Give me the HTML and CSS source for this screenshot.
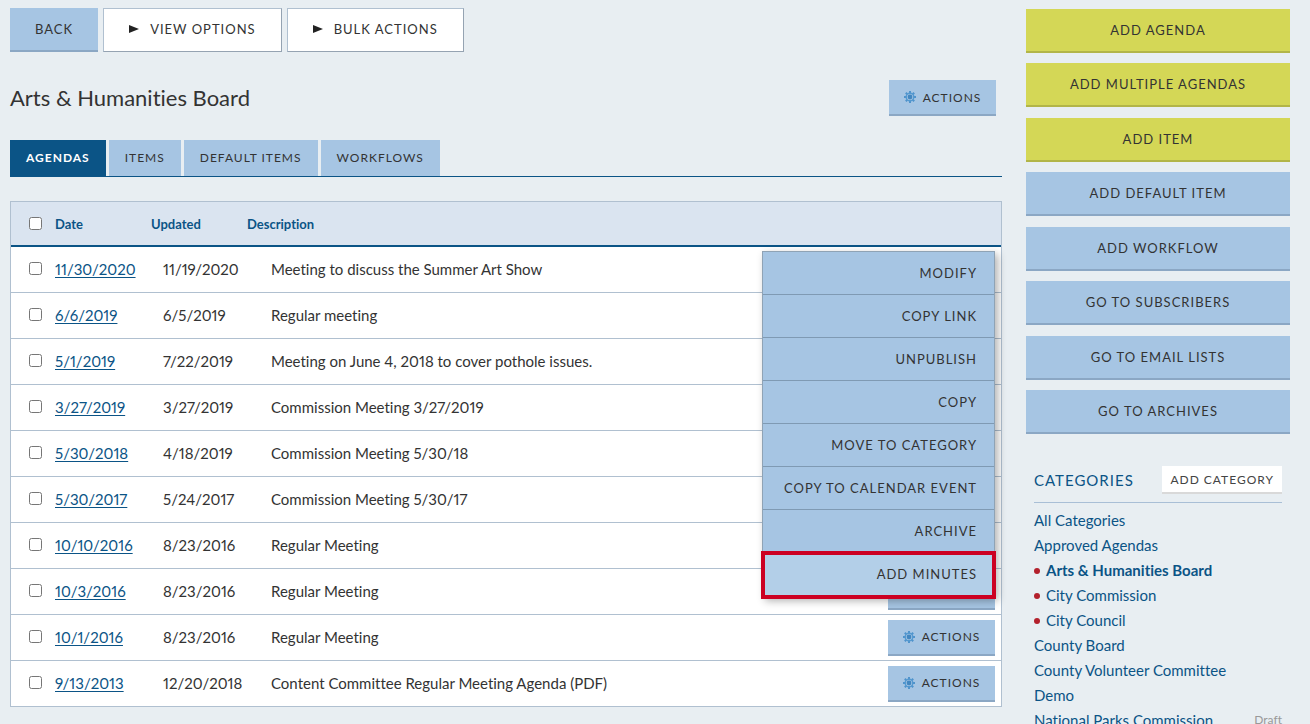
FILE: index.html
```html
<!DOCTYPE html>
<html lang="en">
<head>
  <meta charset="UTF-8" />
  <meta name="viewport" content="width=device-width, initial-scale=1" />
  <title>Agenda Center - Arts &amp; Humanities Board</title>
  <link rel="stylesheet" href="styles.css">
</head>
<body>

  <svg class="sprite" aria-hidden="true">
    <symbol id="gear" viewBox="0 0 12 12">
      <path d="M6 0V12M0 6H12M1.8 1.8L10.2 10.2M10.2 1.8L1.8 10.2" stroke="#4f93cb" stroke-width="2" />
      <circle cx="6" cy="6" r="3.8" fill="#a6c5e3" stroke="#5499d0" stroke-width="1.4" />
      <circle cx="6" cy="6" r="2.4" fill="#4387c0" />
    </symbol>
  </svg>

  <div class="page">
    <main class="main">
      <div class="toolbar">
        <button class="button" type="button">Back</button>
        <button class="button button-white" type="button"><svg class="arrow" viewBox="0 0 10 8" aria-hidden="true"><path d="M0 0L10 4L0 8Z" /></svg>View Options</button>
        <button class="button button-white" type="button"><svg class="arrow" viewBox="0 0 10 8" aria-hidden="true"><path d="M0 0L10 4L0 8Z" /></svg>Bulk Actions</button>
      </div>

      <div class="heading">
        <h1>Arts &amp; Humanities Board</h1>
        <button class="button actions" type="button"><svg class="gear" aria-hidden="true"><use href="#gear" /></svg>Actions</button>
      </div>

      <nav class="tabs">
        <a class="active" href="#">Agendas</a>
        <a href="#">Items</a>
        <a href="#">Default Items</a>
        <a href="#">Workflows</a>
      </nav>

      <table class="agendas">
        <thead>
          <tr>
            <th class="check"><input type="checkbox" aria-label="Select all"></th>
            <th>Date</th>
            <th>Updated</th>
            <th class="description">Description</th>
          </tr>
        </thead>
        <tbody>
          <tr>
            <td class="check"><input type="checkbox" aria-label="Select 11/30/2020"></td>
            <td><a href="#">11/30/2020</a></td>
            <td>11/19/2020</td>
            <td class="description">Meeting to discuss the Summer Art Show</td>
            <td class="options">
              <ul class="menu">
                <li><a href="#">Modify</a></li>
                <li><a href="#">Copy Link</a></li>
                <li><a href="#">Unpublish</a></li>
                <li><a href="#">Copy</a></li>
                <li><a href="#">Move to Category</a></li>
                <li><a href="#">Copy to Calendar Event</a></li>
                <li><a href="#">Archive</a></li>
                <li class="highlight"><a href="#">Add Minutes</a></li>
              </ul>
            </td>
          </tr>
          <tr>
            <td class="check"><input type="checkbox" aria-label="Select 6/6/2019"></td>
            <td><a href="#">6/6/2019</a></td>
            <td>6/5/2019</td>
            <td class="description">Regular meeting</td>
          </tr>
          <tr>
            <td class="check"><input type="checkbox" aria-label="Select 5/1/2019"></td>
            <td><a href="#">5/1/2019</a></td>
            <td>7/22/2019</td>
            <td class="description">Meeting on June 4, 2018 to cover pothole issues.</td>
          </tr>
          <tr>
            <td class="check"><input type="checkbox" aria-label="Select 3/27/2019"></td>
            <td><a href="#">3/27/2019</a></td>
            <td>3/27/2019</td>
            <td class="description">Commission Meeting 3/27/2019</td>
          </tr>
          <tr>
            <td class="check"><input type="checkbox" aria-label="Select 5/30/2018"></td>
            <td><a href="#">5/30/2018</a></td>
            <td>4/18/2019</td>
            <td class="description">Commission Meeting 5/30/18</td>
          </tr>
          <tr>
            <td class="check"><input type="checkbox" aria-label="Select 5/30/2017"></td>
            <td><a href="#">5/30/2017</a></td>
            <td>5/24/2017</td>
            <td class="description">Commission Meeting 5/30/17</td>
          </tr>
          <tr>
            <td class="check"><input type="checkbox" aria-label="Select 10/10/2016"></td>
            <td><a href="#">10/10/2016</a></td>
            <td>8/23/2016</td>
            <td class="description">Regular Meeting</td>
          </tr>
          <tr>
            <td class="check"><input type="checkbox" aria-label="Select 10/3/2016"></td>
            <td><a href="#">10/3/2016</a></td>
            <td>8/23/2016</td>
            <td class="description">Regular Meeting</td>
            <td class="options"><button class="button actions" type="button" aria-label="Actions"></button></td>
          </tr>
          <tr>
            <td class="check"><input type="checkbox" aria-label="Select 10/1/2016"></td>
            <td><a href="#">10/1/2016</a></td>
            <td>8/23/2016</td>
            <td class="description">Regular Meeting</td>
            <td class="options"><button class="button actions" type="button"><svg class="gear" aria-hidden="true"><use href="#gear" /></svg>Actions</button></td>
          </tr>
          <tr>
            <td class="check"><input type="checkbox" aria-label="Select 9/13/2013"></td>
            <td><a href="#">9/13/2013</a></td>
            <td>12/20/2018</td>
            <td class="description">Content Committee Regular Meeting Agenda (PDF)</td>
            <td class="options"><button class="button actions" type="button"><svg class="gear" aria-hidden="true"><use href="#gear" /></svg>Actions</button></td>
          </tr>
        </tbody>
      </table>
    </main>

    <aside class="sidebar">
      <div class="side-buttons">
        <button class="button button-green" type="button">Add Agenda</button>
        <button class="button button-green" type="button">Add Multiple Agendas</button>
        <button class="button button-green" type="button">Add Item</button>
        <button class="button" type="button">Add Default Item</button>
        <button class="button" type="button">Add Workflow</button>
        <button class="button" type="button">Go to Subscribers</button>
        <button class="button" type="button">Go to Email Lists</button>
        <button class="button" type="button">Go to Archives</button>
      </div>

      <section class="categories">
        <header>
          <h2>Categories</h2>
          <button class="add-category" type="button">Add Category</button>
        </header>
        <ul>
          <li><a href="#">All Categories</a></li>
          <li><a href="#">Approved Agendas</a></li>
          <li class="marked current"><a href="#">Arts &amp; Humanities Board</a></li>
          <li class="marked"><a href="#">City Commission</a></li>
          <li class="marked"><a href="#">City Council</a></li>
          <li><a href="#">County Board</a></li>
          <li><a href="#">County Volunteer Committee</a></li>
          <li><a href="#">Demo</a></li>
          <li><a href="#">National Parks Commission</a><span class="status">Draft</span></li>
        </ul>
      </section>
    </aside>
  </div>

</body>
</html>
```
FILE: styles.css
```css
* {
  box-sizing: border-box;
}

body {
  font-family: Lato, sans-serif;
  font-size: 15px;
  line-height: 20px;
  font-variant-ligatures: none;
  font-variant-numeric: proportional-nums;
  background-color: #e8eef2;
  color: #333;
  margin: 0;
}

h1, h2 {
  font-weight: normal;
  margin: 0;
}

ul {
  list-style: none;
  margin: 0;
  padding: 0;
}

a {
  color: #0b5486;
  text-decoration: none;
}

.sprite {
  display: block;
  width: 0;
  height: 0;
}

.page {
  display: flex;
  gap: 24px;
  padding: 8px 20px 0 10px;
}

.main {
  flex: 1;
}

.sidebar {
  width: 264px;
}

/* buttons */
.button {
  display: flex;
  align-items: center;
  justify-content: center;
  height: 44px;
  padding: 0 25px;
  font-family: inherit;
  font-size: 13px;
  letter-spacing: 1px;
  text-transform: uppercase;
  color: #333;
  background: #a6c5e3;
  border: 0;
  border-bottom: 2px solid #8ba7c4;
  cursor: pointer;
}

.button-white {
  padding-bottom: 2px;
  background: #fff;
  border: 1px solid #b0c0d0;
  border-right-color: #95a3b2;
  border-bottom-color: #95a3b2;
}

.button-green {
  background: #d4d756;
  border-bottom-color: #b2b548;
}

.button.actions {
  width: 107px;
  height: 36px;
  padding: 0;
  font-size: 12px;
}

.arrow {
  width: 10px;
  height: 8px;
  margin-right: 11px;
  fill: #222;
}

.gear {
  width: 12px;
  height: 12px;
  margin-right: 7px;
}

.toolbar {
  display: flex;
  gap: 5px;
}

.heading {
  display: flex;
  align-items: center;
  justify-content: space-between;
  padding: 28px 6px 24px 0;
}

.heading h1 {
  font-size: 22px;
}

/* tabs */
.tabs {
  display: flex;
  gap: 3px;
  border-bottom: 1px solid #0b5486;
}

.tabs a {
  padding: 8px 16px;
  font-size: 12px;
  letter-spacing: 1px;
  text-transform: uppercase;
  color: #333;
  background: #a6c5e3;
}

.tabs a.active {
  font-weight: bold;
  color: #fff;
  background: #0b5486;
}

/* agenda list */
.agendas {
  display: block;
  margin-top: 24px;
  background: #fff;
  border: 1px solid #b0c0d0;
  border-bottom: 0;
}

.agendas thead,
.agendas tbody {
  display: block;
}

.agendas tr {
  display: flex;
  align-items: center;
  position: relative;
  height: 46px;
  padding: 0 6px 2px 18px;
  border-bottom: 1px solid #b0c0d0;
}

.agendas thead tr {
  height: 45px;
  padding-bottom: 0;
  background: #dae4f0;
  border-bottom: 2px solid #0b5486;
}

.agendas th {
  width: 96px;
  padding: 0;
  font-size: 13px;
  text-align: left;
  color: #0b5486;
}

.agendas td {
  width: 108px;
  padding: 0;
}

.agendas td a {
  text-decoration: underline;
  text-underline-offset: 2px;
}

.agendas .check {
  display: flex;
  width: 26px;
}

.agendas .check input {
  width: 13px;
  height: 13px;
  margin: 0;
}

.agendas .description {
  flex: 1;
}

.agendas .options {
  width: 107px;
  padding-top: 2px;
}

/* drop-down opened over the first row's button */
.menu {
  position: absolute;
  top: 4px;
  right: 6px;
  z-index: 1;
  width: 233px;
  background: #a6c5e3;
  border: 1px solid #8fa3b5;
  box-shadow: 3px 3px 8px rgba(0, 0, 0, 0.3);
}

.agendas .menu a {
  display: block;
  padding: 11px 17px;
  font-size: 13px;
  letter-spacing: 1px;
  text-align: right;
  text-decoration: none;
  text-transform: uppercase;
  white-space: nowrap;
  color: #333;
  border-bottom: 1px solid #7f9ab3;
}

.agendas .menu .highlight {
  padding-bottom: 1px;
  background: #b3cfe8;
  outline: 4px solid #cc0022;
  outline-offset: -2px;
}

/* sidebar */
.side-buttons {
  display: grid;
  align-content: space-between;
  min-height: 426px;
  padding-top: 1px;
}

.categories {
  padding: 32px 8px 0;
}

.categories header {
  display: flex;
  align-items: center;
  justify-content: space-between;
  padding-bottom: 8px;
  border-bottom: 1px solid #a9bfd6;
}

.categories h2 {
  font-size: 15px;
  letter-spacing: 1px;
  text-transform: uppercase;
  color: #0b5486;
}

.add-category {
  height: 28px;
  padding: 0 8px;
  font-family: inherit;
  font-size: 12px;
  letter-spacing: 1px;
  text-transform: uppercase;
  color: #444;
  background: #fff;
  border: 0;
  border-bottom: 2px solid #d9d9d9;
}

.categories ul {
  padding-top: 4px;
}

.categories li {
  display: flex;
  align-items: center;
  height: 25px;
}

.marked::before {
  content: "";
  width: 6px;
  height: 6px;
  margin: 2px 6px 0 0;
  border-radius: 50%;
  background: #b3202c;
}

.current {
  font-weight: bold;
}

.status {
  margin-left: auto;
  font-size: 12px;
  color: #999;
}
```
